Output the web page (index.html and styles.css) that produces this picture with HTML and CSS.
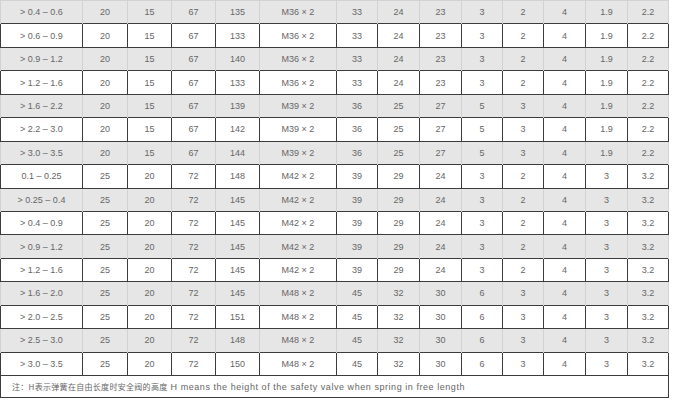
FILE: index.html
```html
<!DOCTYPE html>
<html lang="zh">
<head>
<meta charset="utf-8">
<link rel="stylesheet" href="styles.css">
</head>
<body>
<table class="spec">
<colgroup>
<col class="c-range"><col class="c-n45"><col class="c-n44"><col class="c-n44"><col class="c-n44"><col class="c-thread"><col class="c-n41"><col class="c-n42"><col class="c-n42"><col class="c-n41"><col class="c-n41"><col class="c-n42"><col class="c-n42"><col class="c-n41">
</colgroup>
<tbody>
<tr class="g first"><td>&gt; 0.4 – 0.6</td><td>20</td><td>15</td><td>67</td><td>135</td><td>M36 × 2</td><td>33</td><td>24</td><td>23</td><td>3</td><td>2</td><td>4</td><td>1.9</td><td>2.2</td></tr>
<tr class="w"><td>&gt; 0.6 – 0.9</td><td>20</td><td>15</td><td>67</td><td>133</td><td>M36 × 2</td><td>33</td><td>24</td><td>23</td><td>3</td><td>2</td><td>4</td><td>1.9</td><td>2.2</td></tr>
<tr class="g"><td>&gt; 0.9 – 1.2</td><td>20</td><td>15</td><td>67</td><td>140</td><td>M36 × 2</td><td>33</td><td>24</td><td>23</td><td>3</td><td>2</td><td>4</td><td>1.9</td><td>2.2</td></tr>
<tr class="w"><td>&gt; 1.2 – 1.6</td><td>20</td><td>15</td><td>67</td><td>133</td><td>M36 × 2</td><td>33</td><td>24</td><td>23</td><td>3</td><td>2</td><td>4</td><td>1.9</td><td>2.2</td></tr>
<tr class="g"><td>&gt; 1.6 – 2.2</td><td>20</td><td>15</td><td>67</td><td>139</td><td>M39 × 2</td><td>36</td><td>25</td><td>27</td><td>5</td><td>3</td><td>4</td><td>1.9</td><td>2.2</td></tr>
<tr class="w"><td>&gt; 2.2 – 3.0</td><td>20</td><td>15</td><td>67</td><td>142</td><td>M39 × 2</td><td>36</td><td>25</td><td>27</td><td>5</td><td>3</td><td>4</td><td>1.9</td><td>2.2</td></tr>
<tr class="g"><td>&gt; 3.0 – 3.5</td><td>20</td><td>15</td><td>67</td><td>144</td><td>M39 × 2</td><td>36</td><td>25</td><td>27</td><td>5</td><td>3</td><td>4</td><td>1.9</td><td>2.2</td></tr>
<tr class="w"><td>0.1 – 0.25</td><td>25</td><td>20</td><td>72</td><td>148</td><td>M42 × 2</td><td>39</td><td>29</td><td>24</td><td>3</td><td>2</td><td>4</td><td>3</td><td>3.2</td></tr>
<tr class="g"><td>&gt; 0.25 – 0.4</td><td>25</td><td>20</td><td>72</td><td>145</td><td>M42 × 2</td><td>39</td><td>29</td><td>24</td><td>3</td><td>2</td><td>4</td><td>3</td><td>3.2</td></tr>
<tr class="w"><td>&gt; 0.4 – 0.9</td><td>25</td><td>20</td><td>72</td><td>145</td><td>M42 × 2</td><td>39</td><td>29</td><td>24</td><td>3</td><td>2</td><td>4</td><td>3</td><td>3.2</td></tr>
<tr class="g"><td>&gt; 0.9 – 1.2</td><td>25</td><td>20</td><td>72</td><td>145</td><td>M42 × 2</td><td>39</td><td>29</td><td>24</td><td>3</td><td>2</td><td>4</td><td>3</td><td>3.2</td></tr>
<tr class="w"><td>&gt; 1.2 – 1.6</td><td>25</td><td>20</td><td>72</td><td>145</td><td>M42 × 2</td><td>39</td><td>29</td><td>24</td><td>3</td><td>2</td><td>4</td><td>3</td><td>3.2</td></tr>
<tr class="g"><td>&gt; 1.6 – 2.0</td><td>25</td><td>20</td><td>72</td><td>145</td><td>M48 × 2</td><td>45</td><td>32</td><td>30</td><td>6</td><td>3</td><td>4</td><td>3</td><td>3.2</td></tr>
<tr class="w"><td>&gt; 2.0 – 2.5</td><td>25</td><td>20</td><td>72</td><td>151</td><td>M48 × 2</td><td>45</td><td>32</td><td>30</td><td>6</td><td>3</td><td>4</td><td>3</td><td>3.2</td></tr>
<tr class="g"><td>&gt; 2.5 – 3.0</td><td>25</td><td>20</td><td>72</td><td>148</td><td>M48 × 2</td><td>45</td><td>32</td><td>30</td><td>6</td><td>3</td><td>4</td><td>3</td><td>3.2</td></tr>
<tr class="w"><td>&gt; 3.0 – 3.5</td><td>25</td><td>20</td><td>72</td><td>150</td><td>M48 × 2</td><td>45</td><td>32</td><td>30</td><td>6</td><td>3</td><td>4</td><td>3</td><td>3.2</td></tr>
<tr class="w note"><td colspan="14"><span class="cjk">注：H表示弹簧在自由长度时安全阀的高度</span> H means the height of the safety valve when spring in free length</td></tr>
</tbody>
</table>
</body>
</html>
```

FILE: styles.css
```css
html, body {
  margin: 0;
  padding: 0;
  background: #ffffff;
}

.spec {
  border-collapse: collapse;
  table-layout: fixed;
  width: 669px;
  font-family: "Liberation Sans", Arial, "Noto Sans CJK SC", sans-serif;
  font-size: 9px;
  color: #666666;
}

.c-range { width: 82px; }
.c-n45 { width: 45px; }
.c-n44 { width: 44px; }
.c-thread { width: 77px; }
.c-n41 { width: 41px; }
.c-n42 { width: 42px; }

.spec td {
  height: 22.45px;
  padding: 0;
  text-align: center;
  vertical-align: middle;
  white-space: nowrap;
}

.spec tr.g td {
  background: #e6e6e6;
  border-left: 1px solid #d2d2d2;
  border-right: 1px solid #d2d2d2;
  border-top: none;
  border-bottom: none;
}

.spec tr.g.first td {
  border-top: 1px solid #d2d2d2;
}

.spec tr.w td {
  background: #ffffff;
  border: 1px solid #3c3c3c;
}

.spec tr.note td {
  text-align: left;
  padding-left: 11px;
  height: 21px;
  letter-spacing: 0.55px;
}

.cjk {
  font-family: "Noto Sans CJK SC", sans-serif;
  font-size: 8px;
  letter-spacing: 0.3px;
}
```
